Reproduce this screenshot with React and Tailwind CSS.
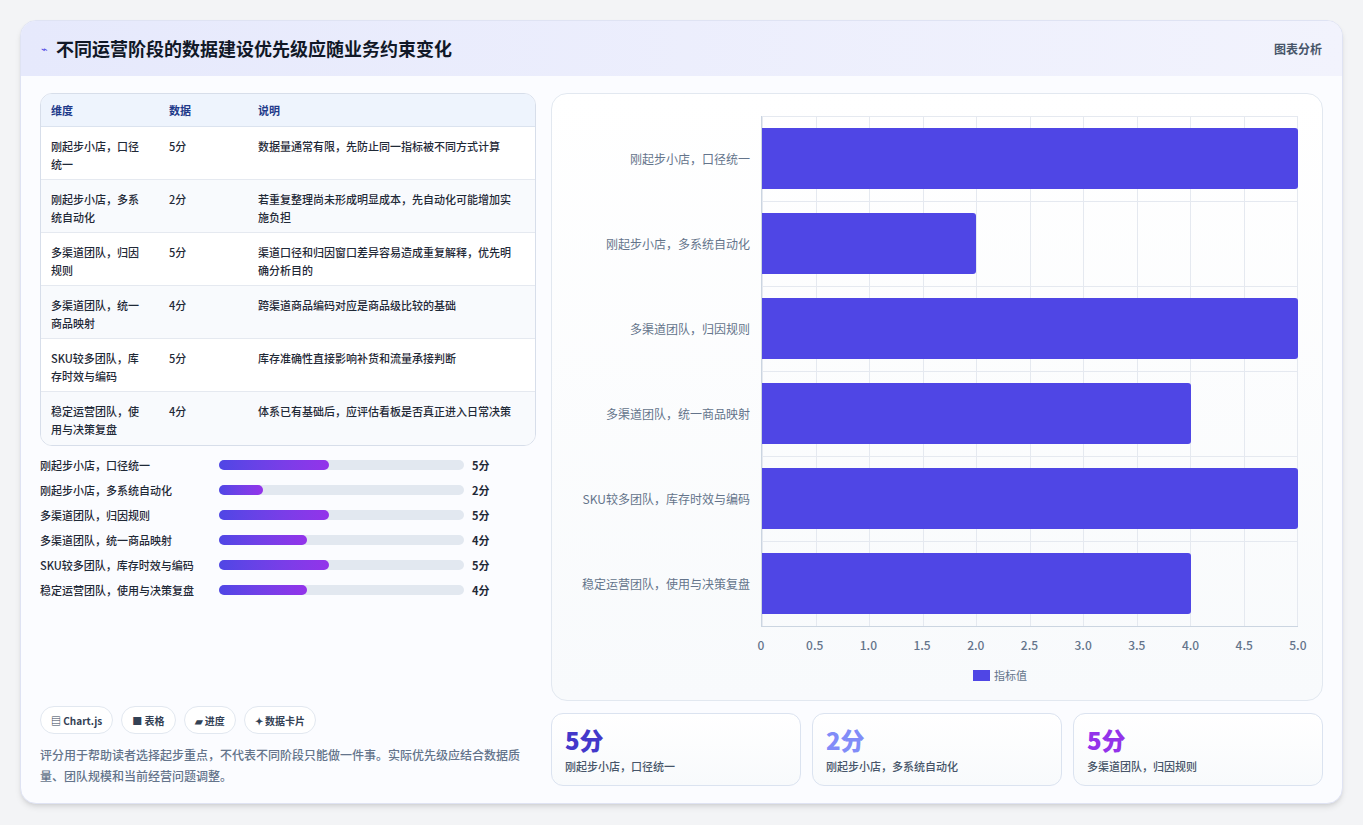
import React from "react";

const rows = [
  { name: "刚起步小店，口径统一", short: ["刚起步小店，口径", "统一"], v: 5, note: "数据量通常有限，先防止同一指标被不同方式计算" },
  { name: "刚起步小店，多系统自动化", short: ["刚起步小店，多系", "统自动化"], v: 2, note: "若重复整理尚未形成明显成本，先自动化可能增加实施负担" },
  { name: "多渠道团队，归因规则", short: ["多渠道团队，归因", "规则"], v: 5, note: "渠道口径和归因窗口差异容易造成重复解释，优先明确分析目的" },
  { name: "多渠道团队，统一商品映射", short: ["多渠道团队，统一", "商品映射"], v: 4, note: "跨渠道商品编码对应是商品级比较的基础" },
  { name: "SKU较多团队，库存时效与编码", short: ["SKU较多团队，库", "存时效与编码"], v: 5, note: "库存准确性直接影响补货和流量承接判断" },
  { name: "稳定运营团队，使用与决策复盘", short: ["稳定运营团队，使", "用与决策复盘"], v: 4, note: "体系已有基础后，应评估看板是否真正进入日常决策" },
];
const ticks = ["0", "0.5", "1.0", "1.5", "2.0", "2.5", "3.0", "3.5", "4.0", "4.5", "5.0"];
const font = { fontFamily: '"Noto Sans CJK SC", "Noto Sans", sans-serif' };

export default function App() {
  return (
    <div className="min-h-[825px] bg-[#f3f4f6] p-5" style={font}>
      <div className="rounded-2xl border border-[#dfe3f3] bg-[#fbfcff] shadow-md overflow-hidden h-[784px] flex flex-col">
        <div className="h-[55px] shrink-0 flex items-center justify-between px-5 bg-gradient-to-r from-[#e6e9fc] to-[#f2f3fd]">
          <div className="flex items-center gap-2">
            <span className="text-[11px] text-[#4f46e5]">⌁</span>
            <h1 className="text-[18px] font-bold text-[#111827]">不同运营阶段的数据建设优先级应随业务约束变化</h1>
          </div>
          <span className="text-[12px] font-semibold text-[#475569]">图表分析</span>
        </div>
        <div className="flex-1 flex gap-[15px] px-[19px] pt-[17px] pb-[18px]">
          <div className="w-[496px] flex flex-col">
            <div className="rounded-xl border border-[#d7deea] bg-white overflow-hidden">
              <div className="grid grid-cols-[118px_89px_1fr] h-[33px] items-center px-[10px] bg-[#eef4fd] text-[11px] font-semibold text-[#1e3a8a] border-b border-[#dbe3ef]">
                <span>维度</span><span>数据</span><span>说明</span>
              </div>
              {rows.map((r, i) => (
                <div key={i} className={`grid grid-cols-[118px_89px_1fr] h-[53px] pt-[10px] px-[10px] text-[11px] leading-[18px] text-[#1f2937] font-medium ${i < 5 ? "border-b border-[#e5e9f0]" : ""} ${i % 2 ? "bg-[#f8fafd]" : "bg-white"}`}>
                  <span>{r.short[0]}<br />{r.short[1]}</span>
                  <span>{r.v}分</span>
                  <span className="pr-2">{r.note}</span>
                </div>
              ))}
            </div>
            <div className="mt-[10px] flex flex-col gap-[7px]">
              {rows.map((r, i) => (
                <div key={i} className="flex items-center h-[18px] text-[11px] font-medium text-[#1f2937]">
                  <span className="w-[179px] whitespace-nowrap">{r.name}</span>
                  <div className="w-[245px] h-[10px] rounded-full bg-[#e2e8f0]">
                    <div className="h-full rounded-full bg-gradient-to-r from-[#4f46e5] to-[#9333ea]" style={{ width: `${r.v * 9}%` }} />
                  </div>
                  <span className="ml-2 font-bold">{r.v}分</span>
                </div>
              ))}
            </div>
            <div className="mt-auto flex gap-2">
              {["▤ Chart.js", "■ 表格", "▰ 进度", "✦ 数据卡片"].map((c) => (
                <span key={c} className="h-[28px] flex items-center px-[10px] rounded-full border border-[#e2e8f0] bg-white text-[10px] font-semibold text-[#334155]">{c}</span>
              ))}
            </div>
            <p className="mt-[10px] text-[12px] leading-[21px] text-[#64748b] font-medium">评分用于帮助读者选择起步重点，不代表不同阶段只能做一件事。实际优先级应结合数据质量、团队规模和当前经营问题调整。</p>
          </div>
          <div className="flex-1 flex flex-col gap-[12px]">
            <div className="h-[608px] rounded-2xl border border-[#e2e8f0] bg-gradient-to-b from-white to-[#f8fafc] pt-[22px] pr-[24px] flex flex-col">
              <div className="flex">
                <div className="w-[209px] flex flex-col">
                  {rows.map((r) => (
                    <div key={r.name} className="h-[85px] flex items-center justify-end pr-[11px] text-[12px] text-[#64748b] whitespace-nowrap">{r.name}</div>
                  ))}
                </div>
                <div className="flex-1 relative border-l border-b border-[#cbd5e1]">
                  <div className="absolute inset-0 flex justify-between pointer-events-none">
                    {ticks.map((t) => <div key={t} className="w-px h-full bg-[#e5e9f0]" />)}
                  </div>
                  <div className="absolute inset-0 flex flex-col pointer-events-none">
                    {rows.map((r) => <div key={r.name} className="h-[85px] border-t border-[#e5e9f0]" />)}
                  </div>
                  <div className="relative flex flex-col">
                    {rows.map((r) => (
                      <div key={r.name} className="h-[85px] flex items-center">
                        <div className="h-[61px] bg-[#4f46e5] rounded-r-[3px]" style={{ width: `${r.v * 20}%` }} />
                      </div>
                    ))}
                  </div>
                </div>
              </div>
              <div className="ml-[209px] flex justify-between mt-[9px] text-[12px] text-[#64748b] font-medium">
                {ticks.map((t) => <span key={t} className="w-0 flex justify-center">{t}</span>)}
              </div>
              <div className="mt-[13px] flex items-center justify-center gap-1 text-[11px] text-[#64748b] pl-[150px]">
                <span className="w-[17px] h-[11px] bg-[#4f46e5]" />指标值
              </div>
            </div>
            <div className="grid grid-cols-3 gap-[11px]">
              {[
                { v: "5分", c: "text-[#4338ca]", n: "刚起步小店，口径统一" },
                { v: "2分", c: "text-[#818cf8]", n: "刚起步小店，多系统自动化" },
                { v: "5分", c: "text-[#9333ea]", n: "多渠道团队，归因规则" },
              ].map((s) => (
                <div key={s.n} className="h-[73px] rounded-xl border border-[#dbe3f0] bg-gradient-to-b from-white to-[#f8fafc] px-[13px] pt-[10px]">
                  <div className={`text-[24px] font-extrabold leading-[32px] ${s.c}`}>{s.v}</div>
                  <div className="text-[11px] text-[#475569] font-medium mt-[2px]">{s.n}</div>
                </div>
              ))}
            </div>
          </div>
        </div>
      </div>
    </div>
  );
}
